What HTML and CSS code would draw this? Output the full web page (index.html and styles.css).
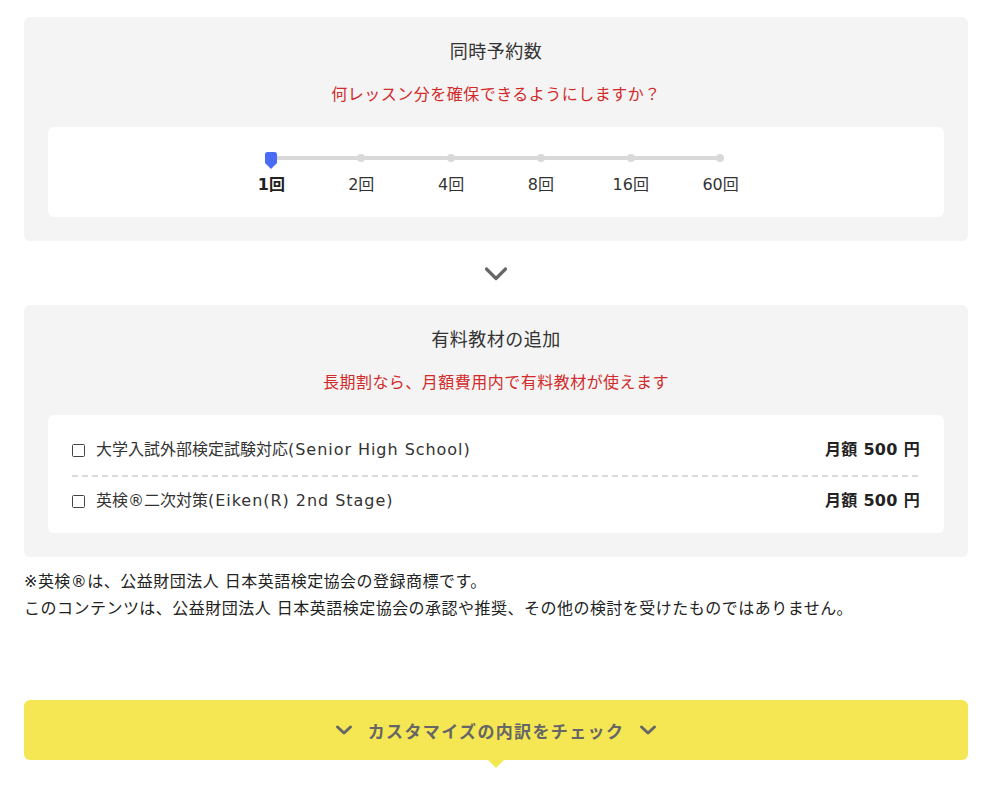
FILE: index.html
```html
<!DOCTYPE html>
<html lang="ja">
<head>
<meta charset="utf-8">
<title>カスタマイズ</title>
<link rel="stylesheet" href="styles.css">
</head>
<body>
<div class="page">
  <section class="card">
    <h2 class="card-title">同時予約数</h2>
    <p class="card-lead">何レッスン分を確保できるようにしますか？</p>
    <div class="panel slider-panel">
      <div class="slider">
        <div class="track-area">
          <div class="track"></div>
          <span class="dot" style="left:44.9px"></span>
          <span class="dot" style="left:134.7px"></span>
          <span class="dot" style="left:224.5px"></span>
          <span class="dot" style="left:314.3px"></span>
          <span class="dot" style="left:404.1px"></span>
          <span class="dot" style="left:493.9px"></span>
          <svg class="handle" width="12" height="17" viewBox="0 0 12 17"><path d="M0 2.5Q0 0 2.5 0H9.5Q12 0 12 2.5V11L6 17L0 11Z" fill="#4a6cf4"/></svg>
        </div>
        <div class="labels">
          <span class="label active">1回</span>
          <span class="label">2回</span>
          <span class="label">4回</span>
          <span class="label">8回</span>
          <span class="label">16回</span>
          <span class="label">60回</span>
        </div>
      </div>
    </div>
  </section>

  <div class="step-arrow">
    <svg width="24" height="16" viewBox="0 0 24 16"><path d="M2.5 3L12 12.5L21.5 3" fill="none" stroke="#666" stroke-width="3.2" stroke-linecap="round" stroke-linejoin="round"/></svg>
  </div>

  <section class="card">
    <h2 class="card-title">有料教材の追加</h2>
    <p class="card-lead">長期割なら、月額費用内で有料教材が使えます</p>
    <div class="panel options">
      <label class="option">
        <span class="option-name"><span class="checkbox"></span>大学入試外部検定試験対応<span class="latin">(Senior High School)</span></span>
        <span class="price">月額 500 円</span>
      </label>
      <label class="option">
        <span class="option-name"><span class="checkbox"></span>英検®二次対策<span class="latin">(Eiken(R) 2nd Stage)</span></span>
        <span class="price">月額 500 円</span>
      </label>
    </div>
  </section>

  <div class="notes">
    <p>※英検®は、公益財団法人 日本英語検定協会の登録商標です。</p>
    <p>このコンテンツは、公益財団法人 日本英語検定協会の承認や推奨、その他の検討を受けたものではありません。</p>
  </div>

  <div class="check-button">
    <svg class="btn-chev" width="18" height="12" viewBox="0 0 18 12"><path d="M2.5 3L9 9L15.5 3" fill="none" stroke="#666" stroke-width="3" stroke-linecap="round" stroke-linejoin="round"/></svg>
    <span class="btn-text">カスタマイズの内訳をチェック</span>
    <svg class="btn-chev" width="18" height="12" viewBox="0 0 18 12"><path d="M2.5 3L9 9L15.5 3" fill="none" stroke="#666" stroke-width="3" stroke-linecap="round" stroke-linejoin="round"/></svg>
  </div>
</div>
</body>
</html>
```

FILE: styles.css
```css
* { box-sizing: border-box; }

html, body {
  margin: 0;
  padding: 0;
  background: #fff;
}

body {
  font-family: "DejaVu Sans", "Noto Sans CJK JP", sans-serif;
  color: #333;
  letter-spacing: 0.03em;
  font-size: 16px;
}

p, h2 { margin: 0; }

.page {
  padding: 17px 34px 40px 24px;
}

.card {
  background: #f4f4f4;
  border-radius: 6px;
  padding: 22px 24px 24px;
}

.card-title {
  font-size: 18px;
  font-weight: normal;
  line-height: 26px;
  text-align: center;
  color: #333;
}

.card-lead {
  margin-top: 17px;
  font-size: 16px;
  line-height: 26px;
  text-align: center;
  color: #d22b2b;
}

.panel {
  margin-top: 19px;
  background: #fff;
  border-radius: 6px;
}

.slider-panel {
  padding: 19px 0 19px;
}

.slider {
  width: 539px;
  margin: 0 auto;
}

.track-area {
  position: relative;
  height: 24px;
}

.track {
  position: absolute;
  left: 44.9px;
  right: 44.9px;
  top: 10px;
  height: 4px;
  background: #d9d9d9;
  border-radius: 2px;
}

.dot {
  position: absolute;
  top: 8px;
  width: 8px;
  height: 8px;
  margin-left: -4px;
  border-radius: 50%;
  background: #d9d9d9;
}

.handle {
  position: absolute;
  left: 38.9px;
  top: 6px;
}

.labels {
  margin-top: 2px;
  display: grid;
  grid-template-columns: repeat(6, 1fr);
}

.label {
  text-align: center;
  font-size: 16px;
  line-height: 26px;
  color: #333;
  letter-spacing: 0;
}

.label.active {
  font-weight: bold;
  color: #222;
}

.step-arrow {
  height: 64px;
  display: flex;
  align-items: center;
  justify-content: center;
  padding-top: 1px;
}

.options {
  padding: 10px 24px 7px;
}

.option {
  display: flex;
  justify-content: space-between;
  align-items: center;
  padding: 12px 0;
  line-height: 26px;
  font-size: 16px;
  color: #333;
}

.option + .option {
  background-image: linear-gradient(to right, #dadada 6px, transparent 6px);
  background-size: 10px 2px;
  background-repeat: repeat-x;
  background-position: left top;
  padding-top: 13px;
}

.option-name {
  display: flex;
  align-items: center;
  letter-spacing: 0;
}

.latin {
  letter-spacing: 0.06em;
}

.checkbox {
  width: 13px;
  height: 13px;
  border: 1.5px solid #444;
  border-radius: 1.5px;
  margin: 0 11px 0 0;
  flex: none;
}

.price {
  font-weight: bold;
  color: #222;
  letter-spacing: 0.02em;
}

.notes {
  margin-top: 11px;
  font-size: 16px;
  line-height: 27px;
  color: #222;
  letter-spacing: 0.03em;
}

.check-button {
  position: relative;
  margin-top: 78px;
  height: 60px;
  background: #f5e653;
  border-radius: 6px;
  display: flex;
  align-items: center;
  justify-content: center;
  gap: 15px;
}

.check-button::after {
  content: "";
  position: absolute;
  left: 50%;
  bottom: -8px;
  margin-left: -8px;
  border-left: 8px solid transparent;
  border-right: 8px solid transparent;
  border-top: 8px solid #f5e653;
}

.btn-text {
  font-size: 17px;
  font-weight: bold;
  color: #666;
  letter-spacing: 0.08em;
}

.btn-chev { display: block; }
```
